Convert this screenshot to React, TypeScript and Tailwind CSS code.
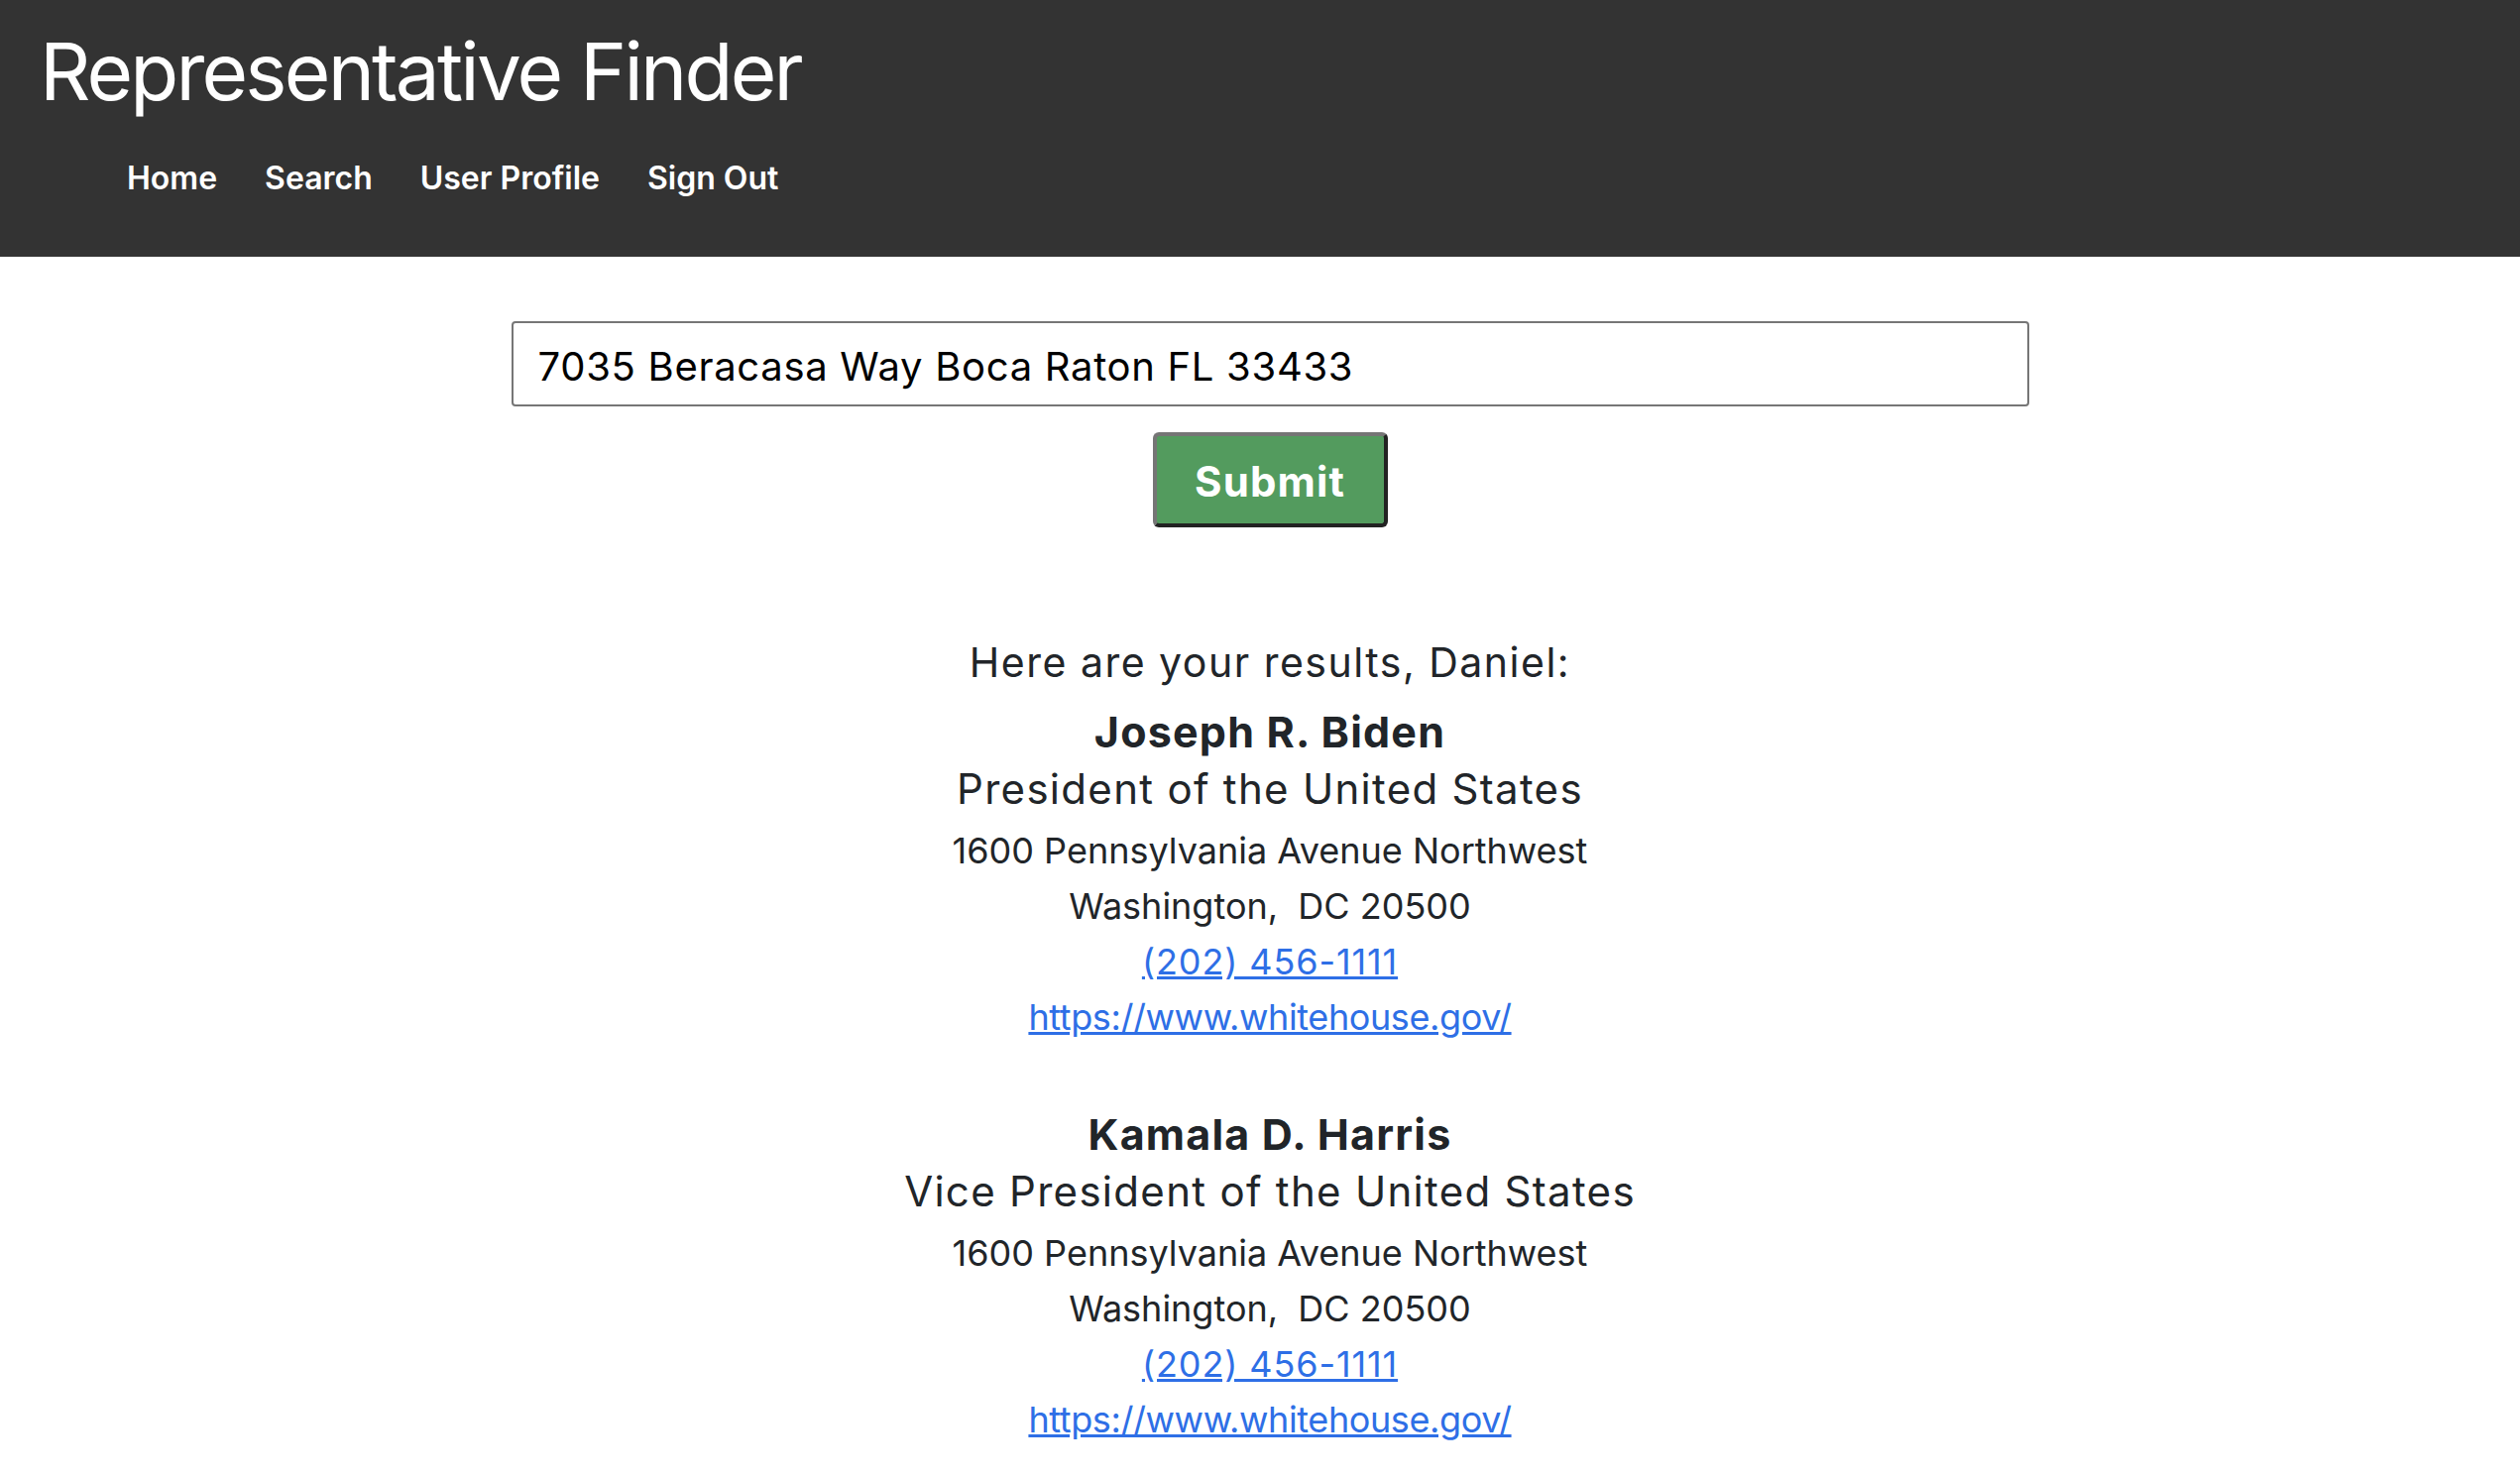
import React from 'react';

const reps = [
  {
    name: 'Joseph R. Biden',
    office: 'President of the United States',
    line1: '1600 Pennsylvania Avenue Northwest',
    city: 'Washington,\u00a0 DC 20500',
    phone: '(202) 456-1111',
    url: 'https://www.whitehouse.gov/',
  },
  {
    name: 'Kamala D. Harris',
    office: 'Vice President of the United States',
    line1: '1600 Pennsylvania Avenue Northwest',
    city: 'Washington,\u00a0 DC 20500',
    phone: '(202) 456-1111',
    url: 'https://www.whitehouse.gov/',
  },
];

const App: React.FC = () => {
  return (
    <div className="min-h-screen bg-white font-['Inter',sans-serif] text-[#212529]">
      <header className="h-[259px] bg-[#333333] px-[40px] pt-[24px]">
        <h1 className="text-[80px] leading-[96px] font-normal text-white tracking-[-2.8px]">Representative Finder</h1>
        <nav className="mt-[40px] ml-[88px] flex gap-[48px] text-[32px] leading-[40px] font-semibold text-white">
          {['Home', 'Search', 'User Profile', 'Sign Out'].map(l => (
            <a key={l} href="#" className="text-white">{l}</a>
          ))}
        </nav>
      </header>

      <main className="pl-[20px] flex flex-col items-center">
        <input
          type="text"
          defaultValue="7035 Beracasa Way Boca Raton FL 33433"
          className="mt-[65px] w-[1531px] h-[86px] border-2 border-[#767676] rounded-[4px] px-[25px] pt-[4px] text-[40px] tracking-[0.7px] text-black outline-none"
        />
        <button className="mt-[26px] w-[237px] h-[96px] rounded-[6px] bg-[#539b5e] border-[4px] border-t-[#757575] border-l-[#757575] border-r-[#222222] border-b-[#222222] pt-[3px] text-white text-[42px] tracking-[1.1px] font-bold">
          Submit
        </button>

        <p className="mt-[108px] text-[41px] tracking-[1.5px] leading-[56px]">Here are your results, Daniel:</p>

        {reps.map((r, i) => (
          <section key={i} className={`flex flex-col items-center text-center ${i === 0 ? 'mt-[14px]' : 'mt-[62px]'}`}>
            <h2 className="text-[43px] leading-[57px] tracking-[1.2px] font-bold">{r.name}</h2>
            <h3 className="text-[42px] leading-[57px] tracking-[1.3px] font-normal">{r.office}</h3>
            <div className="mt-[6px] text-[36px] leading-[56px]">
              <p>{r.line1}</p>
              <p className="whitespace-pre">{r.city}</p>
              <p><a href="#" className="text-[#2e6fe6] underline tracking-[0.9px]">{r.phone}</a></p>
              <p><a href="#" className="text-[#2e6fe6] underline tracking-[-0.4px]">{r.url}</a></p>
            </div>
          </section>
        ))}
      </main>
    </div>
  );
};

export default App;
